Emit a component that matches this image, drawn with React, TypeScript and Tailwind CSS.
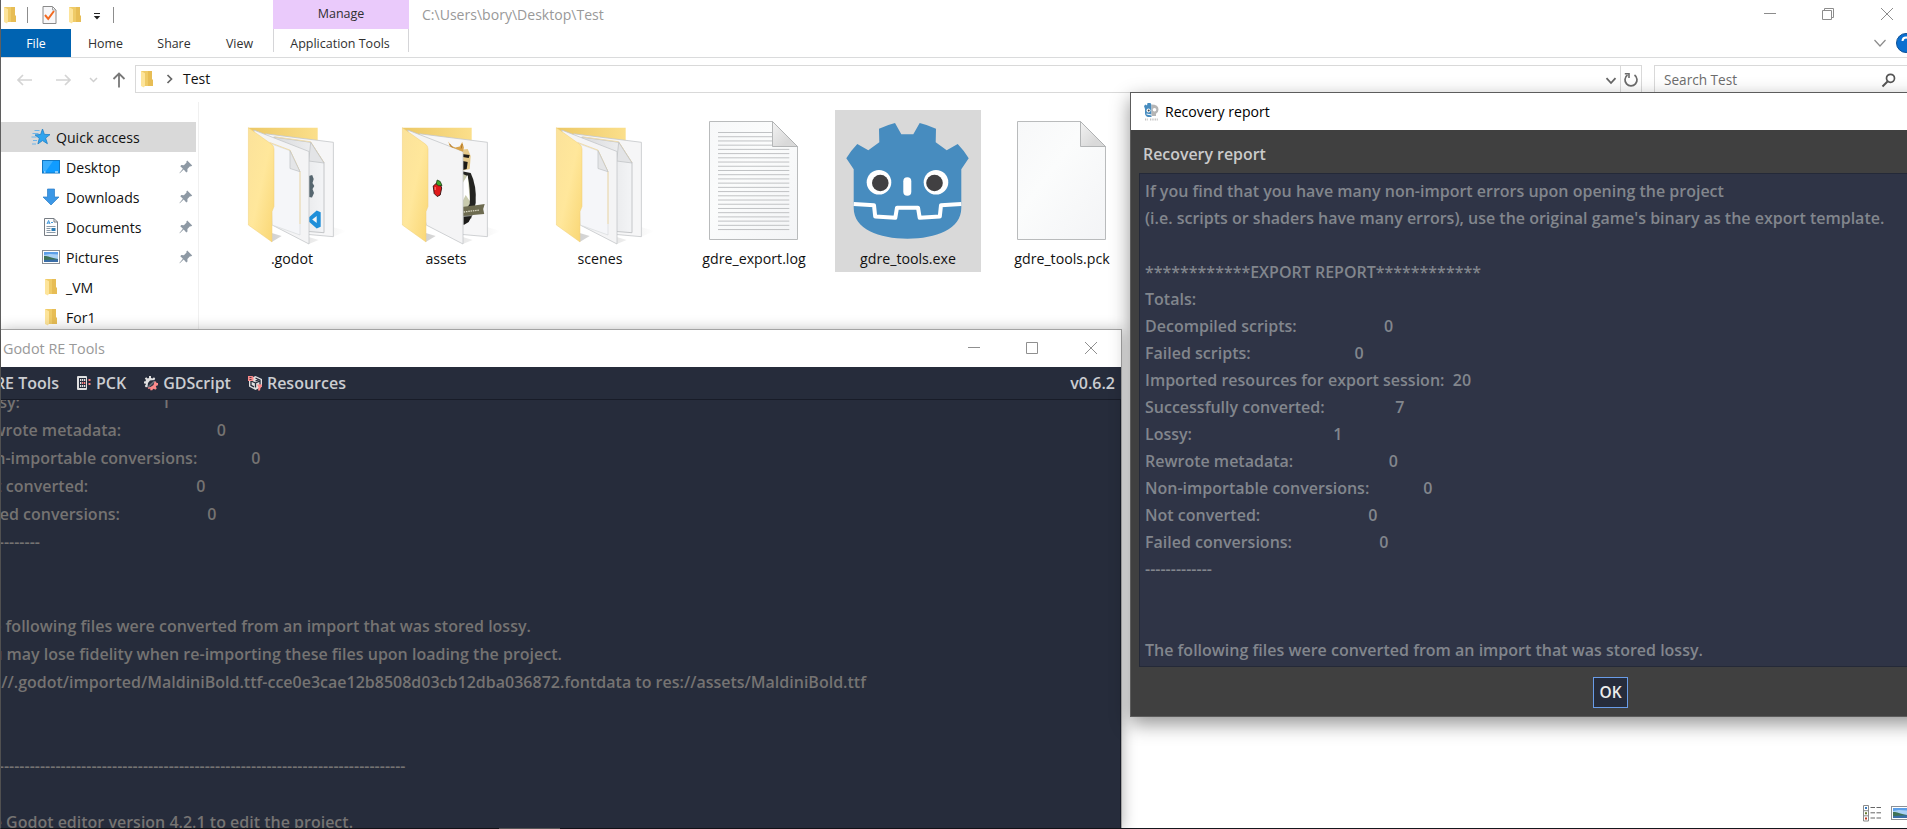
import React from "react";

const shellFont = "font-['Open_Sans','Noto_Sans',sans-serif]";

/* ---------- small icons ---------- */

function SmallFolder() {
  return (
    <svg width="14" height="18" viewBox="0 0 14 18" className="shrink-0">
      <path d="M1 1h9.5l1.5 9v6H1z" fill="#efcb68" />
      <path d="M8 1h4v8l1 1v6H8z" fill="#e7bd55" />
      <path d="M1 1l4 2.2v12L4 17.6 1 16z" fill="#fde49a" />
    </svg>
  );
}

function CheckedDoc() {
  return (
    <svg width="16" height="20" viewBox="0 0 16 20" className="shrink-0">
      <path d="M1 1.5h9.5l3.5 3.5v13.500H1z" fill="#f7f7f9" stroke="#8a8a8a" />
      <path d="M10.500 1.500V5H14" fill="none" stroke="#a5a5a5" />
      <path d="M3 10l3.200 3.800L12 6" fill="none" stroke="#f26a21" strokeWidth="2" />
    </svg>
  );
}

function Pin() {
  return (
    <svg width="14" height="14" viewBox="0 0 14 14" className="shrink-0">
      <path d="M8.200.6l5 5-1.300.9-.9-.3-2.600 2.700.1 2.500-1.200 1L4.700 9.600.8 13.200.4 12.900 3.900 8.800 1.300 6.200l1-1.100 2.600.1 2.700-2.600-.3-.9z" fill="#8e99a4" />
    </svg>
  );
}

function StarIcon() {
  return (
    <svg width="20" height="18" viewBox="0 0 20 18" className="shrink-0">
      <path d="M1.500 5.500h6M3.500 2.500h5M.5 9h5M2 12.500h4M1 16h4" stroke="#6fb4e8" strokeWidth="1" />
      <path d="M11.500 1l1.900 5.400 5.600.2-4.400 3.500 1.800 5.600-4.900-3.100-4.600 3.300 1.400-5.600L4 6.900l5.600-.4z" fill="#2fa4ee" stroke="#1a7fc8" strokeWidth=".8" />
    </svg>
  );
}

function DesktopIcon() {
  return (
    <svg width="18" height="14" viewBox="0 0 18 14">
      <rect x=".5" y=".5" width="17" height="12.500" fill="#109cff" stroke="#1277c2" />
      <path d="M1 1h10L4 11H1z" fill="#3aafff" />
      <path d="M2 12h1.500M13 12h3" stroke="#fff" strokeWidth="1" />
    </svg>
  );
}

function DownloadIcon() {
  return (
    <svg width="18" height="18" viewBox="0 0 18 18">
      <path d="M5.500 1h7v8H17l-8 8L1 9h4.500z" fill="#3b97e6" stroke="#2b7cc6" strokeWidth=".7" />
    </svg>
  );
}

function DocumentIcon() {
  return (
    <svg width="16" height="18" viewBox="0 0 16 18">
      <path d="M1.500.5h9.500l3.500 3.500v13.500h-13z" fill="#fdfdfd" stroke="#777d84" />
      <path d="M11 .5V4h3.500" fill="none" stroke="#777d84" />
      <path d="M4 6l1.600-3.500L7 6M4.500 5h2M8 4.500h2" fill="none" stroke="#2f8fd8" strokeWidth=".9" />
      <path d="M3.500 8.500h9M3.500 10.500h4M3.500 12.500h4M3.500 14.500h9" stroke="#8b9aa8" />
      <rect x="8.500" y="10" width="4" height="3" fill="#2d7db5" />
    </svg>
  );
}

function PictureIcon() {
  return (
    <svg width="18" height="14" viewBox="0 0 18 14" className="shrink-0">
      <rect x=".5" y=".5" width="17" height="13" fill="#fff" stroke="#8b9096" />
      <rect x="2" y="2" width="14" height="10" fill="#a9d0f5" />
      <path d="M2 2h14v2.500L8 4 2 5z" fill="#5d9fe8" />
      <path d="M2 6c3-.5 6 1.500 14 3v1H2z" fill="#3f7257" />
      <path d="M2 10l14-.8V12H2z" fill="#3a6ea8" />
    </svg>
  );
}

/* ---------- large file icons ---------- */

function FolderFrame({ back, front }: { back?: React.ReactNode; front?: React.ReactNode }) {
  return (
    <svg width="128" height="128" viewBox="-0.700 0 128 128">
      <defs>
        <linearGradient id="flap" x1="0" y1="0" x2="1" y2="1">
          <stop offset="0" stopColor="#fbe29a" />
          <stop offset=".5" stopColor="#ffe79b" />
          <stop offset="1" stopColor="#f9d673" />
        </linearGradient>
        <linearGradient id="rear" x1="0" y1="0" x2="1" y2="0">
          <stop offset="0" stopColor="#ecc865" />
          <stop offset="1" stopColor="#fbdf8b" />
        </linearGradient>
        <linearGradient id="cast" x1="0" y1="0" x2="1" y2="0">
          <stop offset="0" stopColor="#d2d2d2" />
          <stop offset="1" stopColor="#ffffff" />
        </linearGradient>
        <linearGradient id="sheetShade" x1="0" y1="0" x2="1" y2="0">
          <stop offset="0" stopColor="#d9dadc" />
          <stop offset="1" stopColor="#f3f4f6" />
        </linearGradient>
      </defs>
      <path d="M104 110l14 4-14 6zM80 120l10 3-10 4zM43 116l10 3-10 6z" fill="url(#cast)" />
      <path d="M19.700 10.700H89V40H30z" fill="url(#rear)" />
      <path d="M37 16.800L104.700 25.300V119.700L80 117.500 37 60z" fill="#f6f6f7" stroke="#c4c6c9" strokeWidth=".8" />
      {back}
      <path d="M25 13L80.300 34.500V127L43.500 108z" fill="#f4f4f5" stroke="#c4c6c9" strokeWidth=".8" />
      {front}
      <path d="M19.700 10.700L43 27.300Q45.300 29 45.300 32V89.500L43.300 94.500V125L19.700 108z" fill="url(#flap)" stroke="#f0cf78" strokeWidth=".5" />
    </svg>
  );
}

function BackPage() {
  return (
    <g>
      <path d="M45 20L82 25.300 95.300 45.700V115.700L80 114.500z" fill="url(#sheetShade)" stroke="#b9bbbe" strokeWidth=".8" />
      <path d="M46 19.800l36 5 13 20.500" fill="none" stroke="#efdcae" />
      <path d="M82 25.300L95.300 46 80 44z" fill="#e3e4e6" stroke="#bcbec1" strokeWidth=".7" />
    </g>
  );
}

function FrontPage() {
  return (
    <g>
      <path d="M40 26L61.300 33.700 71.300 54.700V118L43.500 108z" fill="#f5f6f9" stroke="#d4d6d9" strokeWidth=".6" />
      <path d="M41 25.500l20.300 7.700 10 21.500V107" fill="none" stroke="#f0dcaa" />
      <path d="M61.300 33.700L71.300 54.700 61.300 51.500z" fill="#e4e5e7" stroke="#bfc1c4" strokeWidth=".7" />
    </g>
  );
}

function GodotFolder() {
  return (
    <FolderFrame
      back={
        <g>
          <BackPage />
          <path d="M80 59l3.500-1 1.500 4-1.200 4 1.800 3-1.800 3 1.500 4-2 4.500-3.300-.5z" fill="#56666f" />
          <path d="M80 100.500l8-7 4 1.800v14.500l-4 1.800-8-7z" fill="#1f8fd9" />
          <path d="M83.500 102.500l4.500-3.500v7z" fill="#f4f6f8" />
        </g>
      }
      front={<FrontPage />}
    />
  );
}

function AssetsFolder() {
  return (
    <FolderFrame
      back={
        <g>
          <path d="M76 33l9-1 3 7-1 13-9 2z" fill="#e6c98a" />
          <path d="M79 37l8 1-1 3-6-1zM80 44l5 1-1 7-4 1z" fill="#1d1a16" />
          <path d="M78 54l10 2q6 12 5 30l-3 12-10 10z" fill="#232321" />
          <path d="M80 57l5 2q3 14 2 28l-7 10z" fill="#c9cbae" />
          <path d="M80 66l5-8 2 26-4-6-3 6z" fill="#fff" />
          <path d="M80 92l5 1 4-2v10l-9 7z" fill="#8d8f8b" />
          <path d="M79 90l16-2 7-1-1.500 5 1 5L79 99z" fill="#6d6b50" />
          <path d="M81 95l16-2" stroke="#d9d7c4" strokeWidth="1.300" strokeDasharray="1.500 .8" />
          <path d="M81 100l8-1-3 6-5 3z" fill="#1c1b19" />
        </g>
      }
      front={
        <g>
          <path d="M65.500 24.500l3.200 4.500 4 1.500 4.300-1 2.500-4.500 1.700 5.500-.9 4.200-6.800-2.600-6.200-2.400z" fill="#d9a44c" />
          <path d="M67 27l3 3.500M79.500 27l-1 4.500" stroke="#a8702a" strokeWidth=".9" />
          <path d="M50.500 69l3-2.500 4 .5 1.500 4-1.500 7-3 1.500-3-3z" fill="#e0191b" stroke="#35100f" strokeWidth=".9" />
          <path d="M53.500 67l1-4 3 1.500 1.800 4-3.300.3z" fill="#3fa52c" stroke="#1c3a14" strokeWidth=".8" />
          <path d="M52.500 70v3" stroke="#ff8d85" strokeWidth="1" />
        </g>
      }
    />
  );
}

function ScenesFolder() {
  return <FolderFrame back={<BackPage />} front={<FrontPage />} />;
}

function Page({ lined = false }: { lined?: boolean }) {
  return (
    <svg width="128" height="128" viewBox="0 0 128 128">
      <defs>
        <linearGradient id="page" x1="0" y1="0" x2="1" y2="1">
          <stop offset="0" stopColor="#f7f8f9" />
          <stop offset=".4" stopColor="#fbfcfc" />
          <stop offset="1" stopColor="#f3f4f6" />
        </linearGradient>
        <linearGradient id="curl" x1="0" y1="0" x2=".7" y2=".7">
          <stop offset="0" stopColor="#f3f3f3" />
          <stop offset="1" stopColor="#d9d9d9" />
        </linearGradient>
      </defs>
      <path d="M19.500 4.500H82.500L107.500 29.500V122.500H19.500z" fill="url(#page)" stroke="#b9bbbc" />
      {lined &&
        Array.from({ length: 24 }, (_, i) => (
          <path key={i} d={i < 4 ? `M28 ${15.500 + i * 4.220}H82` : `M28 ${15.500 + i * 4.220}H99.300`} stroke="#c0c2c4" strokeWidth="1" />
        ))}
      <path d="M82.500 4.500L107.500 29.500H82.500z" fill="url(#curl)" stroke="#adafb0" strokeWidth=".9" />
    </svg>
  );
}

function GodotFace() {
  return (
    <svg width="128" height="128" viewBox="0 0 128 128">
      <path
        d="M2.300 41.300Q7 33.500 13.300 27L24.300 33.300 35.300 25.300 35 11.700Q43 8 51 6L57.300 17.300H69.300L75.700 6Q84 8 92 11.700L91.700 25.300 102.700 33.300 113.700 27Q120 33.500 124.700 41.300L117.300 52.300V91C117.300 112 92 121.700 63.500 121.700S9.700 112 9.700 91V52.300z"
        fill="#478cbf"
      />
      <circle cx="35" cy="65.300" r="12.300" fill="#fff" />
      <circle cx="92" cy="65.300" r="12.300" fill="#fff" />
      <circle cx="36.300" cy="66" r="8.300" fill="#414042" />
      <circle cx="90.500" cy="66" r="8.300" fill="#414042" />
      <rect x="59.300" y="60.300" width="8" height="18.500" rx="4" fill="#fff" />
      <path
        d="M9.700 87L30 88.300 31.200 99.500 51.300 100.800 53 90.700H74L75.700 100.800 95.800 99.500 97 88.300 117.300 87"
        fill="none"
        stroke="#fff"
        strokeWidth="4"
        strokeLinejoin="round"
      />
    </svg>
  );
}

/* ---------- explorer ---------- */

const files = [
  { name: ".godot", icon: <GodotFolder /> },
  { name: "assets", icon: <AssetsFolder /> },
  { name: "scenes", icon: <ScenesFolder /> },
  { name: "gdre_export.log", icon: <Page lined /> },
  { name: "gdre_tools.exe", icon: <GodotFace />, selected: true },
  { name: "gdre_tools.pck", icon: <Page /> },
];

const places = [
  { name: "Desktop", icon: <DesktopIcon />, pinned: true },
  { name: "Downloads", icon: <DownloadIcon />, pinned: true },
  { name: "Documents", icon: <DocumentIcon />, pinned: true },
  { name: "Pictures", icon: <PictureIcon />, pinned: true },
  { name: "_VM", icon: <SmallFolder />, pinned: false },
  { name: "For1", icon: <SmallFolder />, pinned: false },
];

function TitleRow() {
  return (
    <div className="flex h-[57px] shrink-0">
      <div className="flex w-[272px] flex-col">
        <div className="flex h-[29px] items-center pl-[2px]">
          <SmallFolder />
          <div className="ml-[10px] h-4 w-px bg-[#8d8d8d]" />
          <div className="ml-[14px]"><CheckedDoc /></div>
          <div className="ml-[10px]"><SmallFolder /></div>
          <svg width="8" height="7" viewBox="0 0 8 7" className="mt-1 ml-[11px]">
            <path d="M1 .5h6" stroke="#222" />
            <path d="M.8 3h6.400L4 6.500z" fill="#222" />
          </svg>
          <div className="ml-[12px] h-4 w-px bg-[#8d8d8d]" />
        </div>
        <div className="flex h-[28px] text-[12.400px] leading-[29px] text-[#303030]">
          <div className="w-[70px] bg-[#0063b1] text-center text-white">File</div>
          <div className="w-[69px] text-center">Home</div>
          <div className="w-[68px] text-center">Share</div>
          <div className="w-[63px] text-center">View</div>
        </div>
      </div>
      <div className="flex w-[136px] flex-col text-center text-[12.500px] text-[#303030]">
        <div className="h-[29px] bg-[#eacafb] leading-[27px]">Manage</div>
        <div className="mb-[5px] h-[23px] border-x border-[#d5d5d8] pr-[2px] leading-[29px]">Application Tools</div>
      </div>
      <div className="pt-[1px] pl-[13px] text-[14.050px] leading-[28px] text-[#999]">C:\Users\bory\Desktop\Test</div>
      <div className="ml-auto flex w-[143px] flex-col">
        <div className="flex h-[29px] items-center">
          <svg width="143" height="29" viewBox="0 0 143 29" fill="none" stroke="#8c8c8c">
            <path d="M0 13.500h12M58.500 10.500h9v9h-9zM60.500 10.500v-2h9v9h-2M117 8l12 12M129 8l-12 12" />
          </svg>
        </div>
        <div className="h-[28px]">
          <svg width="143" height="28" viewBox="0 0 143 28" fill="none">
            <path d="M110.500 11l5.500 6 5.500-6" stroke="#8c8c8c" strokeWidth="1.200" />
            <circle cx="142" cy="14" r="9.500" fill="#0a6fd0" stroke="#0b4f95" />
            <path d="M138.500 12q.2-3.500 3.500-3.500t3.500 3.500" stroke="#fff" strokeWidth="2" />
          </svg>
        </div>
      </div>
    </div>
  );
}

function AddressRow() {
  return (
    <div className="flex h-[45px] shrink-0 items-start border-t border-[#dadbdc] pt-[7px]">
      <svg width="134" height="30" viewBox="0 0 134 30" fill="none" className="shrink-0">
        <path d="M31 15H17m5-5l-5 5 5 5" stroke="#d4d4d4" strokeWidth="1.700" />
        <path d="M55 15h14m-5-5l5 5-5 5" stroke="#d4d4d4" strokeWidth="1.700" />
        <path d="M89 13l3.500 3.500L96 13" stroke="#cfcfcf" strokeWidth="1.500" />
        <path d="M118 22.500V8.500m-5.500 5.500l5.500-5.500 5.500 5.500" stroke="#787878" strokeWidth="1.800" />
      </svg>
      <div className="flex h-[28px] w-[1507px] shrink-0 items-center border border-[#d9d9d9]">
        <div className="-mt-[1px] ml-[4px]"><SmallFolder /></div>
        <svg width="8" height="10" viewBox="0 0 8 10" fill="none" className="ml-[12px]">
          <path d="M1.500 1l4 4-4 4" stroke="#666" strokeWidth="1.700" />
        </svg>
        <span className="ml-[9px] text-[14px] leading-[24px] text-[#111]">Test</span>
        <svg width="12" height="8" viewBox="0 0 12 8" fill="none" className="mt-[3px] mr-[3px] ml-auto">
          <path d="M1.500 1.200L6 6l4.500-4.800" stroke="#666" strokeWidth="1.800" />
        </svg>
        <div className="flex h-full w-[21px] items-center justify-center border-l border-[#d9d9d9] pt-[2px]">
          <svg width="16" height="16" viewBox="0 0 16 16" fill="none">
            <path d="M11.500 3A6 6 0 1 1 4.500 3" stroke="#6b6b6b" strokeWidth="1.700" />
            <path d="M1.800 1.800h4.200v4.200" stroke="#6b6b6b" strokeWidth="1.600" />
          </svg>
        </div>
      </div>
      <div className="ml-[12px] flex h-[28px] min-w-0 flex-1 items-center border border-r-0 border-[#d9d9d9] pt-[2px]">
        <span className="ml-[9px] text-[13.600px] text-[#6d6d6d]">Search Test</span>
        <svg width="15" height="15" viewBox="0 0 15 15" fill="none" className="mr-[11px] ml-auto">
          <circle cx="9.500" cy="5.300" r="4" stroke="#555" strokeWidth="1.700" />
          <path d="M6.500 8.500L1.500 13.500" stroke="#555" strokeWidth="2" />
        </svg>
      </div>
    </div>
  );
}

function Explorer() {
  return (
    <div className={`flex h-[829px] w-[1907px] flex-col border-b border-l border-b-[#15171d] border-l-[#5f5f5f] bg-white ${shellFont}`}>
      <TitleRow />
      <AddressRow />
      <div className="flex min-h-0 flex-1">
        <div className="flex w-[198px] shrink-0 flex-col border-r border-[#f0f0f0] pt-[20px] text-[14.100px] text-[#111]">
          <div className="flex h-[30px] w-[195px] items-center bg-[#d9d9d9] pl-[30px]">
            <StarIcon />
            <span className="ml-[5px] pt-[2px]">Quick access</span>
          </div>
          {places.map((p) => (
            <div key={p.name} className="flex h-[30px] items-center pr-[5px] pl-[41px]">
              <div className="flex w-[18px] justify-center">{p.icon}</div>
              <span className="ml-[6px] flex-1 pt-[2px]">{p.name}</span>
              {p.pinned && <Pin />}
            </div>
          ))}
        </div>
        <div className="flex gap-[8px] pt-[8px] pl-[20px]">
          {files.map((f) => (
            <div
              key={f.name}
              className={
                f.selected
                  ? "flex h-[162px] w-[146px] flex-col items-center bg-[#d9d9d9] pt-[7px]"
                  : "flex h-[162px] w-[146px] flex-col items-center pt-[7px]"
              }
            >
              {f.icon}
              <span className="text-[14.200px] leading-[27px] whitespace-nowrap text-[#111]">{f.name}</span>
            </div>
          ))}
        </div>
      </div>
      <div className="flex h-[30px] shrink-0 items-center justify-end gap-[9px] overflow-hidden">
        <svg width="19" height="17" viewBox="0 0 19 17" fill="none">
          <path d="M.5.5h5v15.500h-5zM.5 5.700h5M.5 10.800h5" stroke="#8a8a8a" />
          <path d="M7.500 2.500h4.500M13.500 2.500H18M7.500 7.800h4.500M13.500 7.800H18M7.500 13h4.500M13.500 13H18" stroke="#666" />
          <path d="M2 3h2" stroke="#3a7cc0" strokeWidth="2" />
          <path d="M2 8.200h2" stroke="#6a7c30" strokeWidth="2" />
          <path d="M2 13.400h2" stroke="#c03a20" strokeWidth="2" />
        </svg>
        <div className="w-[16px] overflow-hidden"><PictureIcon /></div>
      </div>
    </div>
  );
}

/* ---------- report data ---------- */

const stat = (label: string, value: number) => `${label}:`.padEnd(40) + value;

const dialogLines = [
  "If you find that you have many non-import errors upon opening the project",
  "(i.e. scripts or shaders have many errors), use the original game's binary as the export template.",
  "",
  "************EXPORT REPORT************",
  "Totals:",
  stat("Decompiled scripts", 0),
  stat("Failed scripts", 0),
  stat("Imported resources for export session", 20),
  stat("Successfully converted", 7),
  stat("Lossy", 1),
  stat("Rewrote metadata", 0),
  stat("Non-importable conversions", 0),
  stat("Not converted", 0),
  stat("Failed conversions", 0),
  "-------------",
  "",
  "",
  "The following files were converted from an import that was stored lossy.",
];

const logLines = [
  stat("Lossy", 1),
  stat("Rewrote metadata", 0),
  stat("Non-importable conversions", 0),
  stat("Not converted", 0),
  stat("Failed conversions", 0),
  "-------------",
  "",
  "",
  "The following files were converted from an import that was stored lossy.",
  "You may lose fidelity when re-importing these files upon loading the project.",
  "res://.godot/imported/MaldiniBold.ttf-cce0e3cae12b8508d03cb12dba036872.fontdata to res://assets/MaldiniBold.ttf",
  "",
  "",
  "-".repeat(84),
  "",
  "Use Godot editor version 4.2.1 to edit the project.",
];

/* ---------- tools window ---------- */

function PckIcon() {
  return (
    <svg width="16" height="16" viewBox="0 0 16 16">
      <path d="M2 1h8a1 1 0 0 1 1 1v12a1 1 0 0 1-1 1H2a1 1 0 0 1-1-1V2a1 1 0 0 1 1-1z" fill="#e0e0e0" />
      <path d="M3 3h7v10H3z" fill="#262c3b" />
      <path d="M4 4h1.300v2H4zM6 4h1.300v2H6zM8 4h1.300v2H8zM4 7h1.300v2H4zM6 10h1.300v2H6zM4 10h1.300v2H4zM8 10h1.300v2H8z" fill="#e0e0e0" />
      <path d="M6 7h1.300v2H6zM8 7h1.300v2H8zM12.500 4h2v2h-2zM12.500 8h2v2h-2z" fill="#fc7f7f" />
    </svg>
  );
}

function ScriptIcon() {
  return (
    <svg width="16" height="16" viewBox="0 0 16 16">
      <path d="M6 1h2v2l1.500.6L11 2.200 12.200 3.400 11.500 5 7 5.500 5 8l-.5 4L2.800 12.200 1.800 11l1.100-1.600L2.500 8.500H1v-2l1.500-.3.500-1.300L1.800 3.500 3.200 2.200 4.700 3.400 6 3z" fill="#e0e0e0" />
      <path d="M13 6.500l.5 1.500H15v2.300l-1.600.4-.6 1 1 1.600-1.500 1.400-1.500-1-1 .5L9.300 15.300h-2V13.500l-1.800.6-1-1.500 3-.6L10.500 10l1-3.500z" fill="#fc8a8a" />
      <path d="M4.500 11.500l6.500-6 1.500 1-6.500 6z" fill="#e0e0e0" opacity=".35" />
    </svg>
  );
}

function BoxIcon() {
  return (
    <svg width="16" height="16" viewBox="0 0 16 16">
      <path d="M8.500 1L15 4v7.500L8.500 15 2 11.500V4z" fill="#e0e0e0" />
      <path d="M8.500 8v4.500M8.500 8l4.500-2.200v4M8.500 8L4 6v4.300l3 1.500M8.500 3l3.500 1.600L8.500 6" stroke="#262c3b" strokeWidth="1.300" fill="none" />
      <path d="M1 1h4.500l1 1v3l-1 1H1zM10 9.500h5v2l-1.500 1.500-.5 2.500h-2l.5-3z" fill="#fc8a8a" />
      <path d="M2.500 2.500h2M2.500 4.500h2" stroke="#262c3b" strokeWidth=".8" />
    </svg>
  );
}

function ToolsWindow() {
  return (
    <div className="absolute top-[329px] left-px flex h-[499px] w-[1121px] flex-col border-t border-r border-[#a3a3a3] bg-[#262c3b] font-['Open_Sans','Noto_Sans',sans-serif] shadow-[0_2px_14px_rgba(0,0,0,0.32)]">
      <div className="flex h-[37px] shrink-0 items-center bg-white">
        <span className="pl-[2px] text-[14.400px] leading-[36px] text-[#999]">Godot RE Tools</span>
        <svg width="153" height="37" viewBox="0 0 153 37" fill="none" stroke="#8f8f8f" className="ml-auto">
          <path d="M0 17.500h12M58.500 12.500h11v11h-11zM117 12l12 12M129 12l-12 12" />
        </svg>
      </div>
      <div className="flex h-[33px] shrink-0 items-center overflow-hidden border-b border-[#181c28] pb-px text-[16px] leading-[32px] font-semibold text-[#cbcdd1]">
        <div className="flex w-[58px] shrink-0 justify-end whitespace-nowrap">RE Tools</div>
        <div className="ml-[17px] flex items-center gap-[4px]"><PckIcon />PCK</div>
        <div className="ml-[17px] flex items-center gap-[4px]"><ScriptIcon />GDScript</div>
        <div className="ml-[16px] flex items-center gap-[4px]"><BoxIcon />Resources</div>
        <div className="mr-[6px] ml-auto pt-px">v0.6.2</div>
      </div>
      <div className="min-h-0 flex-1 overflow-hidden border-r border-[#181c28]">
        <div className="-mt-[12px] -ml-[28px] text-[16px] leading-[28px] font-semibold whitespace-pre text-[#757372]">
          {logLines.map((l, i) => (
            <div key={i} className="h-[28px]">{l}</div>
          ))}
        </div>
      </div>
    </div>
  );
}

/* ---------- recovery dialog ---------- */

function RecoveryDialog() {
  return (
    <div className="absolute top-[92px] left-[1130px] flex h-[625px] w-[800px] flex-col border border-[#5c5c5c] bg-[#404040] font-['Open_Sans','Noto_Sans',sans-serif] shadow-[0_7px_18px_rgba(0,0,0,0.42)]">
      <div className="flex h-[37px] shrink-0 items-center bg-white pl-[12px]">
        <svg width="17" height="20" viewBox="0 0 17 20" className="shrink-0">
          <path d="M1 4l1.500-1.500L4 3.500 4.500 1h3L8.500 3v12H5q-3-1-3-4V7z" fill="#478cbf" />
          <path d="M8.500 2.500q7 0 7 5 0 3-2.500 4.200v2.300H8.500z" fill="#b5b5b5" />
          <circle cx="5.500" cy="8.500" r="2" fill="#fff" />
          <circle cx="5.700" cy="8.500" r="1" fill="#414042" />
          <circle cx="11.500" cy="7.800" r="1.800" fill="#fff" />
          <path d="M3.500 12l5 1" stroke="#fff" />
          <path d="M2 17.500h3M7 17.500h8" stroke="#c4c4c4" strokeWidth="2" strokeDasharray="1 .7" />
        </svg>
        <span className="ml-[5px] text-[14.100px] leading-[36px] text-black">Recovery report</span>
      </div>
      <div className="h-[43px] shrink-0 pt-[8px] pl-[12px] text-[15.900px] leading-[32px] font-semibold text-[#cbcbcb]">
        Recovery report
      </div>
      <div className="mr-0 ml-[8px] h-[494px] shrink-0 overflow-hidden border border-[#242938] bg-[#2f3446] pt-[4px] pl-[5px] text-[16px] leading-[27px] font-semibold whitespace-pre text-[#82868d]">
        {dialogLines.map((l, i) => (
          <div key={i} className="h-[27px]">{l}</div>
        ))}
      </div>
      <div className="flex flex-1 items-start pt-[10px] pl-[462px]">
        <button className="flex h-[31px] w-[35px] items-center justify-center border border-[#699ce8] bg-[#262c3b] text-[15.500px] font-semibold text-[#ececec]">
          OK
        </button>
      </div>
    </div>
  );
}

export default function App() {
  return (
    <div className="relative h-[829px] w-[1907px] overflow-hidden bg-white">
      <Explorer />
      <ToolsWindow />
      <RecoveryDialog />
      <div className="absolute top-[828px] left-[499px] h-px w-[61px] bg-[#555]" />
    </div>
  );
}
